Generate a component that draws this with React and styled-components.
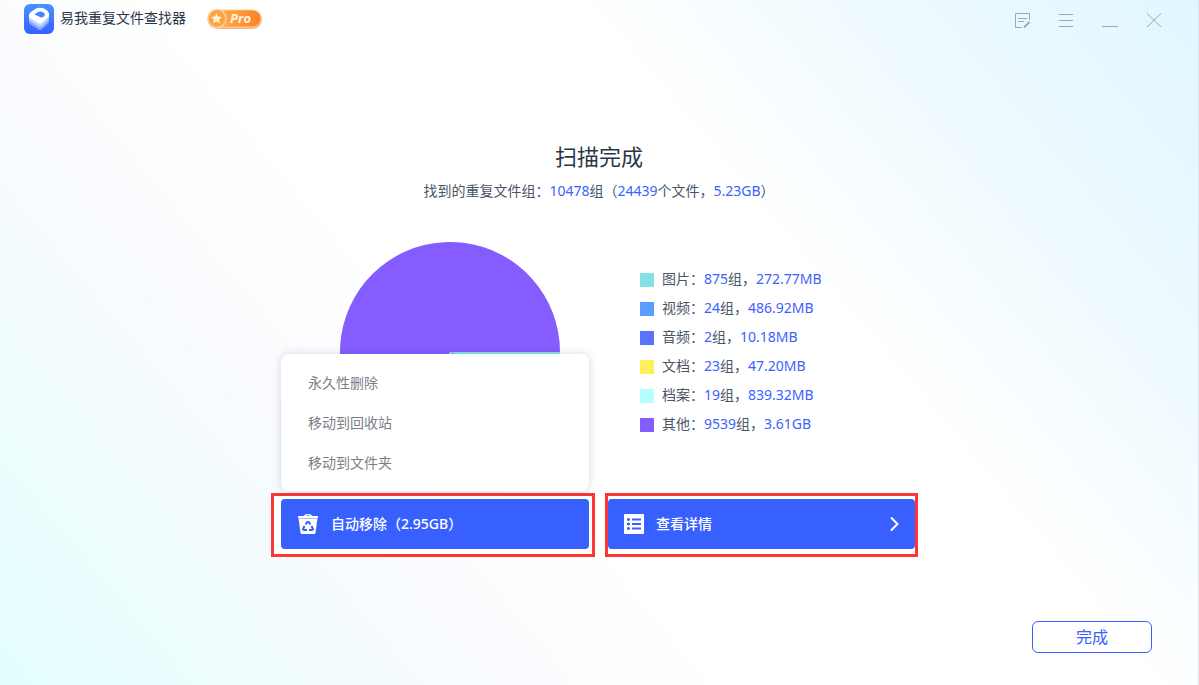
import React from 'react'
import styled, { createGlobalStyle } from 'styled-components'

const GlobalStyle = createGlobalStyle`
  * {
    box-sizing: border-box;
  }
  body {
    margin: 0;
    color: #4a5568;
    font: 14px/20px 'Noto Sans', 'Noto Sans CJK SC', sans-serif;
  }
  button {
    padding: 0;
    border: 0;
    background: none;
    color: inherit;
    font: inherit;
    cursor: pointer;
  }
`
const Window = styled.div`
  min-height: 100vh;
  display: flex;
  flex-direction: column;
  border-right: 1px solid #dce6f0;
  background: linear-gradient(
    50deg,
    #e2fdff 0%,
    #eefdfe 12%,
    #f9fbfe 28%,
    #ffffff 42%,
    #ffffff 64%,
    #f8fdff 72%,
    #eefaff 82%,
    #e0f6ff 100%
  );
`
const TitleBar = styled.header`
  height: 40px;
  display: flex;
  align-items: center;
  justify-content: space-between;
  padding: 0 36px 0 24px;
`
const Brand = styled.div`
  display: flex;
  align-items: center;
  padding-bottom: 2px;
  color: #2b3648;
`
const AppName = styled.h1`
  margin: 0 20px 0 6px;
  padding-bottom: 2px;
  font-size: 14px;
  font-weight: 400;
`
const WindowControls = styled.div`
  display: flex;
  gap: 28px;
  padding-top: 2px;
  color: #9aa7b6;
`
const ControlButton = styled.button`
  width: 16px;
  height: 16px;
  display: flex;
`
const Main = styled.main`
  flex: 1;
  display: flex;
  flex-direction: column;
  align-items: center;
  padding-top: 101px;
`
const Title = styled.h2`
  margin: 0;
  color: #2b3648;
  font-size: 22px;
  line-height: 30px;
  font-weight: 400;
`
const Summary = styled.p`
  margin: 10px 0 0;
`
const Value = styled.span`
  color: #3b62ff;
`
const Results = styled.section`
  display: flex;
  gap: 80px;
  width: 518px;
  margin: 41px 0 31px;
  align-items: center;
`
const Legend = styled.ul`
  margin: 0;
  padding: 0;
  list-style: none;
  white-space: nowrap;
`
const LegendItem = styled.li`
  height: 29px;
  display: flex;
  align-items: center;
  gap: 8px;
`
const LegendText = styled.span`
  padding-bottom: 2px;
`
const Swatch = styled.span`
  width: 14px;
  height: 14px;
  background: ${(props) => props.$color};
`
const Actions = styled.section`
  display: flex;
  gap: 10px;
  margin-right: 9px;
`
const Highlight = styled.div`
  position: relative;
  width: ${(props) => props.$width};
  padding: ${(props) => props.$pad};
  border: 3px solid #fc3535;
  background: #ffffff;
`
const ActionButton = styled.button`
  width: 100%;
  height: 50px;
  display: flex;
  align-items: center;
  gap: 12px;
  padding: 0 16px;
  border-radius: 4px;
  background: #3860ff;
  color: #ffffff;
  font-weight: 500;
`
const ActionLabel = styled.span`
  flex: 1;
  text-align: left;
`
const Menu = styled.ul`
  position: absolute;
  left: 7px;
  right: 3px;
  bottom: 63px;
  margin: 0;
  padding: 9px 0 8px;
  border-radius: 8px;
  background: #ffffff;
  box-shadow: 0 0 8px rgba(60, 80, 100, 0.22);
  list-style: none;
`
const MenuButton = styled.button`
  width: 100%;
  height: 40px;
  padding: 0 27px;
  color: #7b8088;
  text-align: left;
`
const Footer = styled.footer`
  display: flex;
  justify-content: flex-end;
  padding: 0 46px 32px;
`
const DoneButton = styled.button`
  width: 120px;
  height: 32px;
  border: 1px solid #3860ff;
  border-radius: 6px;
  background: #ffffff;
  color: #3860ff;
  font-size: 16px;
`

const categories = [
  { name: '图片', groups: 875, size: '272.77MB', mb: 272.77, color: '#82e2e8' },
  { name: '视频', groups: 24, size: '486.92MB', mb: 486.92, color: '#5a9eff' },
  { name: '音频', groups: 2, size: '10.18MB', mb: 10.18, color: '#5a72ff' },
  { name: '文档', groups: 23, size: '47.20MB', mb: 47.2, color: '#ffef5c' },
  { name: '档案', groups: 19, size: '839.32MB', mb: 839.32, color: '#b4ffff' },
  { name: '其他', groups: 9539, size: '3.61GB', mb: 3696.64, color: '#855cff' }
]

const menuItems = ['永久性删除', '移动到回收站', '移动到文件夹']

const Logo = () => (
  <svg width="30" height="30" viewBox="0 0 30 30" aria-hidden="true">
    <defs>
      <linearGradient id="logo" x1="0" y1="0" x2="0" y2="1">
        <stop offset="0" stopColor="#4a92ff" />
        <stop offset="1" stopColor="#3560ff" />
      </linearGradient>
    </defs>
    <rect width="30" height="30" rx="6" fill="url(#logo)" />
    <path d="M5 16 L16 22.500 L25 15 V17.500 Q25 18.500 24 19.500 L18 25 Q16.500 26.500 14.500 25.500 L6.500 20.500 Q5 19.500 5 18Z" fill="#86aaff" />
    <path d="M5 13 L16 19.500 L25 12 V14.500 Q25 15.500 24 16.500 L18 22 Q16.500 23.500 14.500 22.500 L6.500 17.500 Q5 16.500 5 15Z" fill="#bdd2ff" />
    <path d="M12.500 4.300 Q14 3.500 16 3.700 Q21 4 24 7.500 Q26.500 11 24 13.500 L18 18.800 Q16.500 20.300 14.500 19.300 L6.500 14.500 Q4 12.500 5 10.500 Q5.500 9 7.500 7.500Z" fill="#fff" />
    <path d="M10.500 10.500 L14 8 Q18 6.500 20.500 9.500 Q21.500 12 19 13 Q16.500 14 15 12.500Z" fill="#4581ff" />
  </svg>
)

const ProBadge = () => (
  <svg width="57" height="22" viewBox="0 0 57 22" role="img" aria-label="Pro">
    <defs>
      <linearGradient id="pro" x1="0" y1="0" x2="1" y2="0">
        <stop offset="0" stopColor="#ffb64d" />
        <stop offset="1" stopColor="#ff8126" />
      </linearGradient>
    </defs>
    <rect x="4" y="2" width="52" height="19" rx="9.500" fill="#f3b98e" />
    <rect x="5" y="2" width="50" height="17" rx="8.500" fill="url(#pro)" stroke="#ffcb91" />
    <circle cx="11" cy="11.500" r="9.500" fill="#f3b98e" />
    <circle cx="11" cy="10.500" r="9" fill="#ffa240" stroke="#ffcf98" strokeWidth="1.500" />
    <path d="M10.500 5 L12.100 8.500 L15.900 9 L13.100 11.600 L13.800 15.400 L10.500 13.500 L7.200 15.400 L7.900 11.600 L5.100 9 L8.900 8.500Z" fill="#fff0da" />
    <text x="24" y="15" fill="#fff4e4" fontFamily="Open Sans, sans-serif" fontSize="13" fontWeight="700" fontStyle="italic">Pro</text>
  </svg>
)

const NoteIcon = () => (
  <svg width="16" height="16" viewBox="0 0 16 16" fill="none" stroke="currentColor">
    <path d="M8 14.500 H1.500 V0.500 H15.500 V7 M4 5.500 H13 M4 8.500 H10" />
    <path d="M10 14.500 L15.500 9" strokeWidth="2" />
  </svg>
)

const MenuIcon = () => (
  <svg width="16" height="16" viewBox="0 0 16 16" stroke="currentColor">
    <path d="M1 1.500 H15 M1 7.500 H15 M1 13.500 H15" />
  </svg>
)

const MinimizeIcon = () => (
  <svg width="16" height="16" viewBox="0 0 16 16" stroke="currentColor">
    <path d="M0 13.500 H16" />
  </svg>
)

const CloseIcon = () => (
  <svg width="16" height="16" viewBox="0 0 16 16" stroke="currentColor">
    <path d="M1 0.500 L15 14 M15 0.500 L1 14" />
  </svg>
)

const TrashIcon = () => (
  <svg width="22" height="22" viewBox="0 0 22 22">
    <path d="M1 3 H7 Q7.500 1 11 1 Q14.500 1 15 3 H21 V5 H1Z M9 3 H13 Q12.500 2.200 11 2.200 Q9.500 2.200 9 3Z" fill="#fff" fillRule="evenodd" />
    <path d="M1.500 5 H20.500 L18.500 20 Q18.200 21 17 21 H5 Q3.800 21 3.500 20Z" fill="#fff" />
    <path d="M1.500 5.500 H20.500" stroke="#a9bbff" />
    <g fill="none" stroke="#3860ff" strokeWidth="2">
      <path d="M8.500 11.500 L10.300 9 H11.700 L13.500 11.500" />
      <path d="M14.500 13 L16 16 L15 17 H12" />
      <path d="M7.500 13 L6 16 L7 17 H10" />
    </g>
  </svg>
)

const ListIcon = () => (
  <svg width="20" height="20" viewBox="0 0 20 20">
    <rect width="20" height="20" rx="1" fill="#fff" />
    <path d="M8 5.500 H17 M8 10 H17 M8 14.500 H17" stroke="#3860ff" strokeWidth="2" />
    <path d="M3 5.500 H6 M3 10 H6 M3 14.500 H6" stroke="#3860ff" strokeWidth="2" />
    <path d="M4.500 4 V7 M4.500 8.500 V11.500 M4.500 13 V16" stroke="#3860ff" />
  </svg>
)

const ChevronIcon = () => (
  <svg width="9" height="16" viewBox="0 0 9 16" fill="none" stroke="#fff" strokeWidth="2" strokeLinecap="round">
    <path d="M1.500 2 L7.500 8 L1.500 14" />
  </svg>
)

const PieChart = ({ data }) => {
  const total = data.reduce((sum, d) => sum + d.mb, 0)
  let angle = 0

  const slices = data.map((d) => {
    const start = angle
    angle += (d.mb / total) * Math.PI * 2
    const x1 = 110 + 110 * Math.cos(start)
    const y1 = 110 + 110 * Math.sin(start)
    const x2 = 110 + 110 * Math.cos(angle)
    const y2 = 110 + 110 * Math.sin(angle)
    const large = angle - start > Math.PI ? 1 : 0
    return <path key={d.name} fill={d.color} d={`M110 110 L${x1} ${y1} A110 110 0 ${large} 1 ${x2} ${y2}Z`} />
  })

  return <svg width="220" height="220" viewBox="0 0 220 220" aria-hidden="true">{slices}</svg>
}

const App = () => (
  <>
    <GlobalStyle />
    <Window>
      <TitleBar>
        <Brand>
          <Logo />
          <AppName>易我重复文件查找器</AppName>
          <ProBadge />
        </Brand>
        <WindowControls>
          <ControlButton aria-label="反馈"><NoteIcon /></ControlButton>
          <ControlButton aria-label="菜单"><MenuIcon /></ControlButton>
          <ControlButton aria-label="最小化"><MinimizeIcon /></ControlButton>
          <ControlButton aria-label="关闭"><CloseIcon /></ControlButton>
        </WindowControls>
      </TitleBar>
      <Main>
        <Title>扫描完成</Title>
        <Summary>
          找到的重复文件组：<Value>10478</Value>组（<Value>24439</Value>个文件，<Value>5.23GB</Value>）
        </Summary>
        <Results>
          <PieChart data={categories} />
          <Legend>
            {categories.map((c) => (
              <LegendItem key={c.name}>
                <Swatch $color={c.color} />
                <LegendText>{c.name}：<Value>{c.groups}</Value>组，<Value>{c.size}</Value></LegendText>
              </LegendItem>
            ))}
          </Legend>
        </Results>
        <Actions>
          <Highlight $width="324px" $pad="3px 3px 5px 7px">
            <Menu>
              {menuItems.map((item) => (
                <li key={item}><MenuButton>{item}</MenuButton></li>
              ))}
            </Menu>
            <ActionButton>
              <TrashIcon />
              <ActionLabel>自动移除（2.95GB）</ActionLabel>
            </ActionButton>
          </Highlight>
          <Highlight $width="313px" $pad="3px 0 5px">
            <ActionButton>
              <ListIcon />
              <ActionLabel>查看详情</ActionLabel>
              <ChevronIcon />
            </ActionButton>
          </Highlight>
        </Actions>
      </Main>
      <Footer>
        <DoneButton>完成</DoneButton>
      </Footer>
    </Window>
  </>
)

export default App
